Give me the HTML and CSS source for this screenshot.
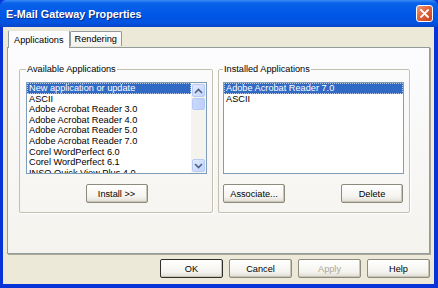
FILE: index.html
```html
<!DOCTYPE html>
<html lang="en">

<head>
	<meta charset="UTF-8">
	<meta name="viewport" content="width=device-width, initial-scale=1.0">
	<title>E-Mail Gateway Properties</title>
	<link rel="stylesheet" href="styles.css">
</head>

<body>
	<div class="window">
		<div class="titlebar">
			<span class="title">E-Mail Gateway Properties</span>
			<button class="close" title="Close">
				<svg width="9" height="9" viewBox="0 0 9 9">
					<path d="M1 1 L8 8 M8 1 L1 8" stroke="#fff" stroke-width="1.8" stroke-linecap="square" />
				</svg>
			</button>
		</div>
		<div class="dialog">
			<div class="tabs">
				<div class="tab active">Applications</div>
				<div class="tab">Rendering</div>
			</div>
			<div class="panel">
				<fieldset class="group available">
					<legend>Available Applications</legend>
					<div class="listbox">
						<ul class="items">
							<li class="selected">New application or update</li>
							<li>ASCII</li>
							<li>Adobe Acrobat Reader 3.0</li>
							<li>Adobe Acrobat Reader 4.0</li>
							<li>Adobe Acrobat Reader 5.0</li>
							<li>Adobe Acrobat Reader 7.0</li>
							<li>Corel WordPerfect 6.0</li>
							<li>Corel WordPerfect 6.1</li>
							<li>INSO Quick View Plus 4.0</li>
						</ul>
						<div class="scrollbar">
							<div class="sb-btn">
								<svg width="9" height="6" viewBox="0 0 9 6">
									<path d="M1 5 L4.5 1.5 L8 5" fill="none" stroke="#4d6185" stroke-width="1.6" />
								</svg>
							</div>
							<div class="sb-thumb"></div>
							<div class="sb-track"></div>
							<div class="sb-btn">
								<svg width="9" height="6" viewBox="0 0 9 6">
									<path d="M1 1 L4.5 4.5 L8 1" fill="none" stroke="#4d6185" stroke-width="1.6" />
								</svg>
							</div>
						</div>
					</div>
					<div class="group-actions centered">
						<button class="btn">Install &gt;&gt;</button>
					</div>
				</fieldset>
				<fieldset class="group installed">
					<legend>Installed Applications</legend>
					<div class="listbox">
						<ul class="items">
							<li class="selected">Adobe Acrobat Reader 7.0</li>
							<li>ASCII</li>
						</ul>
					</div>
					<div class="group-actions spread">
						<button class="btn">Associate...</button>
						<button class="btn">Delete</button>
					</div>
				</fieldset>
			</div>
			<div class="footer">
				<button class="btn default">OK</button>
				<button class="btn">Cancel</button>
				<button class="btn" disabled>Apply</button>
				<button class="btn">Help</button>
			</div>
		</div>
	</div>
</body>

</html>
```

FILE: styles.css
```css
body {
	margin: 0;
	font-family: 'Liberation Sans', Arial, sans-serif;
	font-size: 9.2px;
	color: #000;
	background: #fff;
}

.window {
	width: 438px;
	height: 288px;
	display: flex;
	flex-direction: column;
	background: #0833d6;
	box-sizing: border-box;
}

.titlebar {
	height: 27px;
	flex-shrink: 0;
	display: flex;
	align-items: center;
	justify-content: space-between;
	padding: 0 5px 0 6px;
	background: linear-gradient(#3d8df5 0, #0a62ea 3px, #0058e6 50%, #0252e0 85%, #0a45c8 100%);
	border-radius: 6px 6px 0 0;
}

.title {
	color: #fff;
	font-weight: bold;
	font-size: 10.8px;
	text-shadow: 1px 1px 0 #0b2a86;
}

.close {
	width: 17px;
	height: 17px;
	padding: 0;
	margin-top: -1px;
	border: 1px solid #fff;
	border-radius: 3px;
	background: linear-gradient(135deg, #f09a78 0%, #e0633c 45%, #c9431f 100%);
	display: flex;
	align-items: center;
	justify-content: center;
}

.dialog {
	flex: 1;
	margin: 0 4px 4px 3px;
	background: #ece9d8;
	padding: 3px 4px 0 4px;
	display: flex;
	flex-direction: column;
}

.tabs {
	display: flex;
	align-items: flex-end;
	height: 17px;
	padding-left: 1px;
	position: relative;
	z-index: 1;
}

.tab {
	height: 15px;
	padding: 0 4px;
	display: flex;
	align-items: center;
	border: 1px solid #919b9c;
	border-bottom: none;
	border-radius: 2px 2px 0 0;
	background: linear-gradient(#fefefe, #f1f0ea);
	box-sizing: border-box;
	margin-bottom: 1px;
}

.tab.active {
	height: 18px;
	padding: 0 5px;
	background: #fcfcfe;
	border-top-color: #e8e6dc;
	margin-bottom: -1px;
}

.panel {
	height: 207px;
	box-sizing: border-box;
	border: 1px solid #919b9c;
	box-shadow: 1px 1px 0 #aca899;
	background: linear-gradient(#fcfcfe, #f4f3ee);
	display: flex;
	gap: 5px;
	padding: 16px 19px 0 11px;
}

.group {
	margin: 0;
	height: 149px;
	box-sizing: border-box;
	border: 1px solid #c3c0b1;
	box-shadow: 1px 1px 0 #fff;
	border-radius: 2px;
	padding: 0 5px 9px 6px;
	display: flex;
	flex-direction: column;
}

.group legend {
	padding: 0 1px;
	line-height: 11px;
}

.available {
	width: 194px;
}

.installed {
	width: 192px;
	padding-left: 4px;
}

.listbox {
	height: 92px;
	margin-top: 7px;
	box-sizing: border-box;
	border: 1px solid #7f9db9;
	background: #fff;
	display: flex;
	overflow: hidden;
}

.items {
	list-style: none;
	margin: 0;
	padding: 0;
	flex: 1;
}

.items li {
	line-height: 10.6px;
	padding-left: 2px;
	white-space: nowrap;
}

.items li.selected {
	background: #316ac5;
	color: #fff;
	outline: 1px dotted #b9c9e8;
	outline-offset: -1px;
}

.scrollbar {
	width: 15px;
	display: flex;
	flex-direction: column;
	background: #f4f3ee;
	padding: 1px 0;
	box-sizing: border-box;
}

.sb-btn {
	height: 13px;
	margin: 0 1px;
	border: 1px solid #b7caf5;
	border-radius: 2px;
	background: linear-gradient(135deg, #e3ecfd, #c1d3fb);
	box-sizing: border-box;
	display: flex;
	align-items: center;
	justify-content: center;
}

.sb-thumb {
	height: 12px;
	margin: 1px 1px 0;
	border: 1px solid #b7caf5;
	border-radius: 2px;
	background: linear-gradient(90deg, #c9d8fc, #bccefa);
	box-sizing: border-box;
}

.sb-track {
	flex: 1;
}

.group-actions {
	display: flex;
	margin-top: 10px;
}

.centered {
	justify-content: center;
}

.spread {
	justify-content: space-between;
	padding-right: 1px;
}

.btn {
	width: 62px;
	height: 19px;
	padding: 0;
	font-family: inherit;
	font-size: 9.2px;
	color: #000;
	border: 1px solid #8d8a7e;
	border-radius: 2px;
	background: linear-gradient(#ffffff, #f4f3ee 70%, #dedbd0);
	box-shadow: inset -1px -1px 0 #c9c6b8;
}

.btn.default {
	border-color: #2e2e2a;
}

.btn:disabled {
	color: #aca899;
}

.footer {
	display: flex;
	justify-content: flex-end;
	gap: 6px;
	margin-top: 5px;
}

.footer .btn {
	width: 63px;
}
```
